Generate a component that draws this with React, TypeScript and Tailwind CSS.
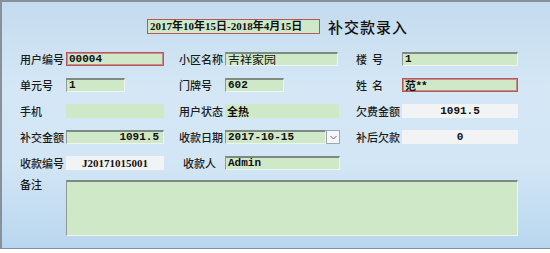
import React from 'react';

const cjk = { fontFamily: '"Noto Sans CJK SC", "Liberation Sans", sans-serif' };
const mono = { fontFamily: '"Liberation Mono", "Noto Sans CJK SC", monospace' };

type Kind = 'green' | 'red' | 'flat' | 'white';

const boxStyles: Record<Kind, string> = {
  green: 'bg-[#cfe8c8] border-t-2 border-l border-t-[#7c8a80] border-l-[#8e9a92] border-b border-r border-b-[#eef5ee] border-r-[#eef5ee]',
  red: 'bg-[#cfe8c8] border border-[#b4585a] shadow-[inset_0_0_0_1px_#c98a8a]',
  flat: 'bg-[#cfe8c8]',
  white: 'bg-[#f1f3f5] justify-center',
};

const Field: React.FC<{ w: string; kind?: Kind; align?: 'left' | 'right' | 'center'; children?: React.ReactNode; font?: 'mono' | 'cjk' }>
  = ({ w, kind = 'green', align = 'left', children, font = 'mono' }) => {
  const justify = align === 'right' ? 'justify-end pr-1' : align === 'center' ? 'justify-center' : 'justify-start pl-[2px]';
  return (
    <div className={`${w} h-[14px] flex items-center ${boxStyles[kind]} ${justify} text-[11px] font-bold text-[#111] leading-none overflow-hidden`}
      style={font === 'mono' ? mono : cjk}>
      {children}
    </div>
  );
};

const Label: React.FC<{ children: React.ReactNode; className?: string }> = ({ children, className = '' }) => (
  <div className={`w-[46px] shrink-0 text-[11px] font-medium text-[#1c1c1c] leading-none whitespace-pre ${className}`} style={cjk}>{children}</div>
);

const Row: React.FC<{ children: React.ReactNode }> = ({ children }) => (
  <div className="flex items-center h-[14px]">{children}</div>
);

export default function App() {
  return (
    <div className="w-[550px] h-[253px] bg-white overflow-hidden">
      <div className="w-[550px] h-[249px] border-t-2 border-l-2 border-b border-[#85929d] bg-[linear-gradient(180deg,#c4dbee_0%,#d5e7f5_35%,#d3e6f5_65%,#b9d6ee_100%)]">
        {/* title */}
        <div className="flex items-center h-[16px] mt-[16px] pl-[145px]">
          <div className="w-[173px] h-[15px] flex items-center pl-[2px] bg-[#cfe8c8] border border-[#b4585a] text-[11px] font-bold text-[#111] leading-none" style={{ fontFamily: '"Liberation Serif", "Noto Sans CJK SC", serif' }}>
            2017年10年15日-2018年4月15日
          </div>
          <div className="ml-[8px] text-[15px] font-medium text-[#111] tracking-[1px] leading-none" style={cjk}>补交款录入</div>
        </div>

        <div className="pl-[18px] mt-[18px] flex flex-col gap-[12px]">
          <Row>
            <div className="flex items-center w-[159px]"><Label>用户编号</Label><Field w="w-[98px]" kind="red">00004</Field></div>
            <div className="flex items-center w-[177px]"><Label>小区名称</Label><Field w="w-[113px]" font="cjk"><span className="font-normal text-[12px]">吉祥家园</span></Field></div>
            <div className="flex items-center"><Label>楼  号</Label><Field w="w-[116px]">1</Field></div>
          </Row>
          <Row>
            <div className="flex items-center w-[159px]"><Label>单元号</Label><Field w="w-[59px]">1</Field></div>
            <div className="flex items-center w-[177px]"><Label>门牌号</Label><Field w="w-[59px]">602</Field></div>
            <div className="flex items-center"><Label>姓  名</Label><Field w="w-[116px]" kind="red" font="cjk">范**</Field></div>
          </Row>
          <Row>
            <div className="flex items-center w-[159px]"><Label>手机</Label><Field w="w-[98px]" kind="flat" /></div>
            <div className="flex items-center w-[177px]"><Label>用户状态</Label><Field w="w-[114px]" kind="flat" font="cjk">全热</Field></div>
            <div className="flex items-center"><Label>欠费金额</Label><Field w="w-[116px]" kind="white" align="center">1091.5</Field></div>
          </Row>
          <Row>
            <div className="flex items-center w-[159px]"><Label>补交金额</Label><Field w="w-[98px]" align="right">1091.5</Field></div>
            <div className="flex items-center w-[177px]">
              <Label>收款日期</Label>
              <Field w="w-[101px]">2017-10-15</Field>
              <div className="w-[14px] h-[14px] flex items-center justify-center bg-[#f4f6f8] border border-[#9aa6b0]">
                <svg width="7" height="5" viewBox="0 0 7 5"><path d="M0.5 1 L3.5 4 L6.5 1" fill="none" stroke="#667" strokeWidth="1" /></svg>
              </div>
            </div>
            <div className="flex items-center"><Label>补后欠款</Label><Field w="w-[116px]" kind="white" align="center">0</Field></div>
          </Row>
          <Row>
            <div className="flex items-center w-[159px]"><Label>收款编号</Label><Field w="w-[98px]" kind="white" align="center"><span style={{ fontFamily: '"Liberation Serif", serif' }}>J20171015001</span></Field></div>
            <div className="flex items-center w-[177px]"><Label className="pl-[4px]">收款人</Label><Field w="w-[115px]">Admin</Field></div>
          </Row>
        </div>

        <div className="pl-[18px] mt-[8px] flex items-start">
          <Label className="mt-[1px]">备注</Label>
          <div className="w-[452px] h-[56px] mt-[2px] bg-[#cfe8c8] border-t-2 border-l border-t-[#7c8a80] border-l-[#8e9a92] border-b border-r border-b-[#eef5ee] border-r-[#eef5ee]" />
        </div>
      </div>
    </div>
  );
}
